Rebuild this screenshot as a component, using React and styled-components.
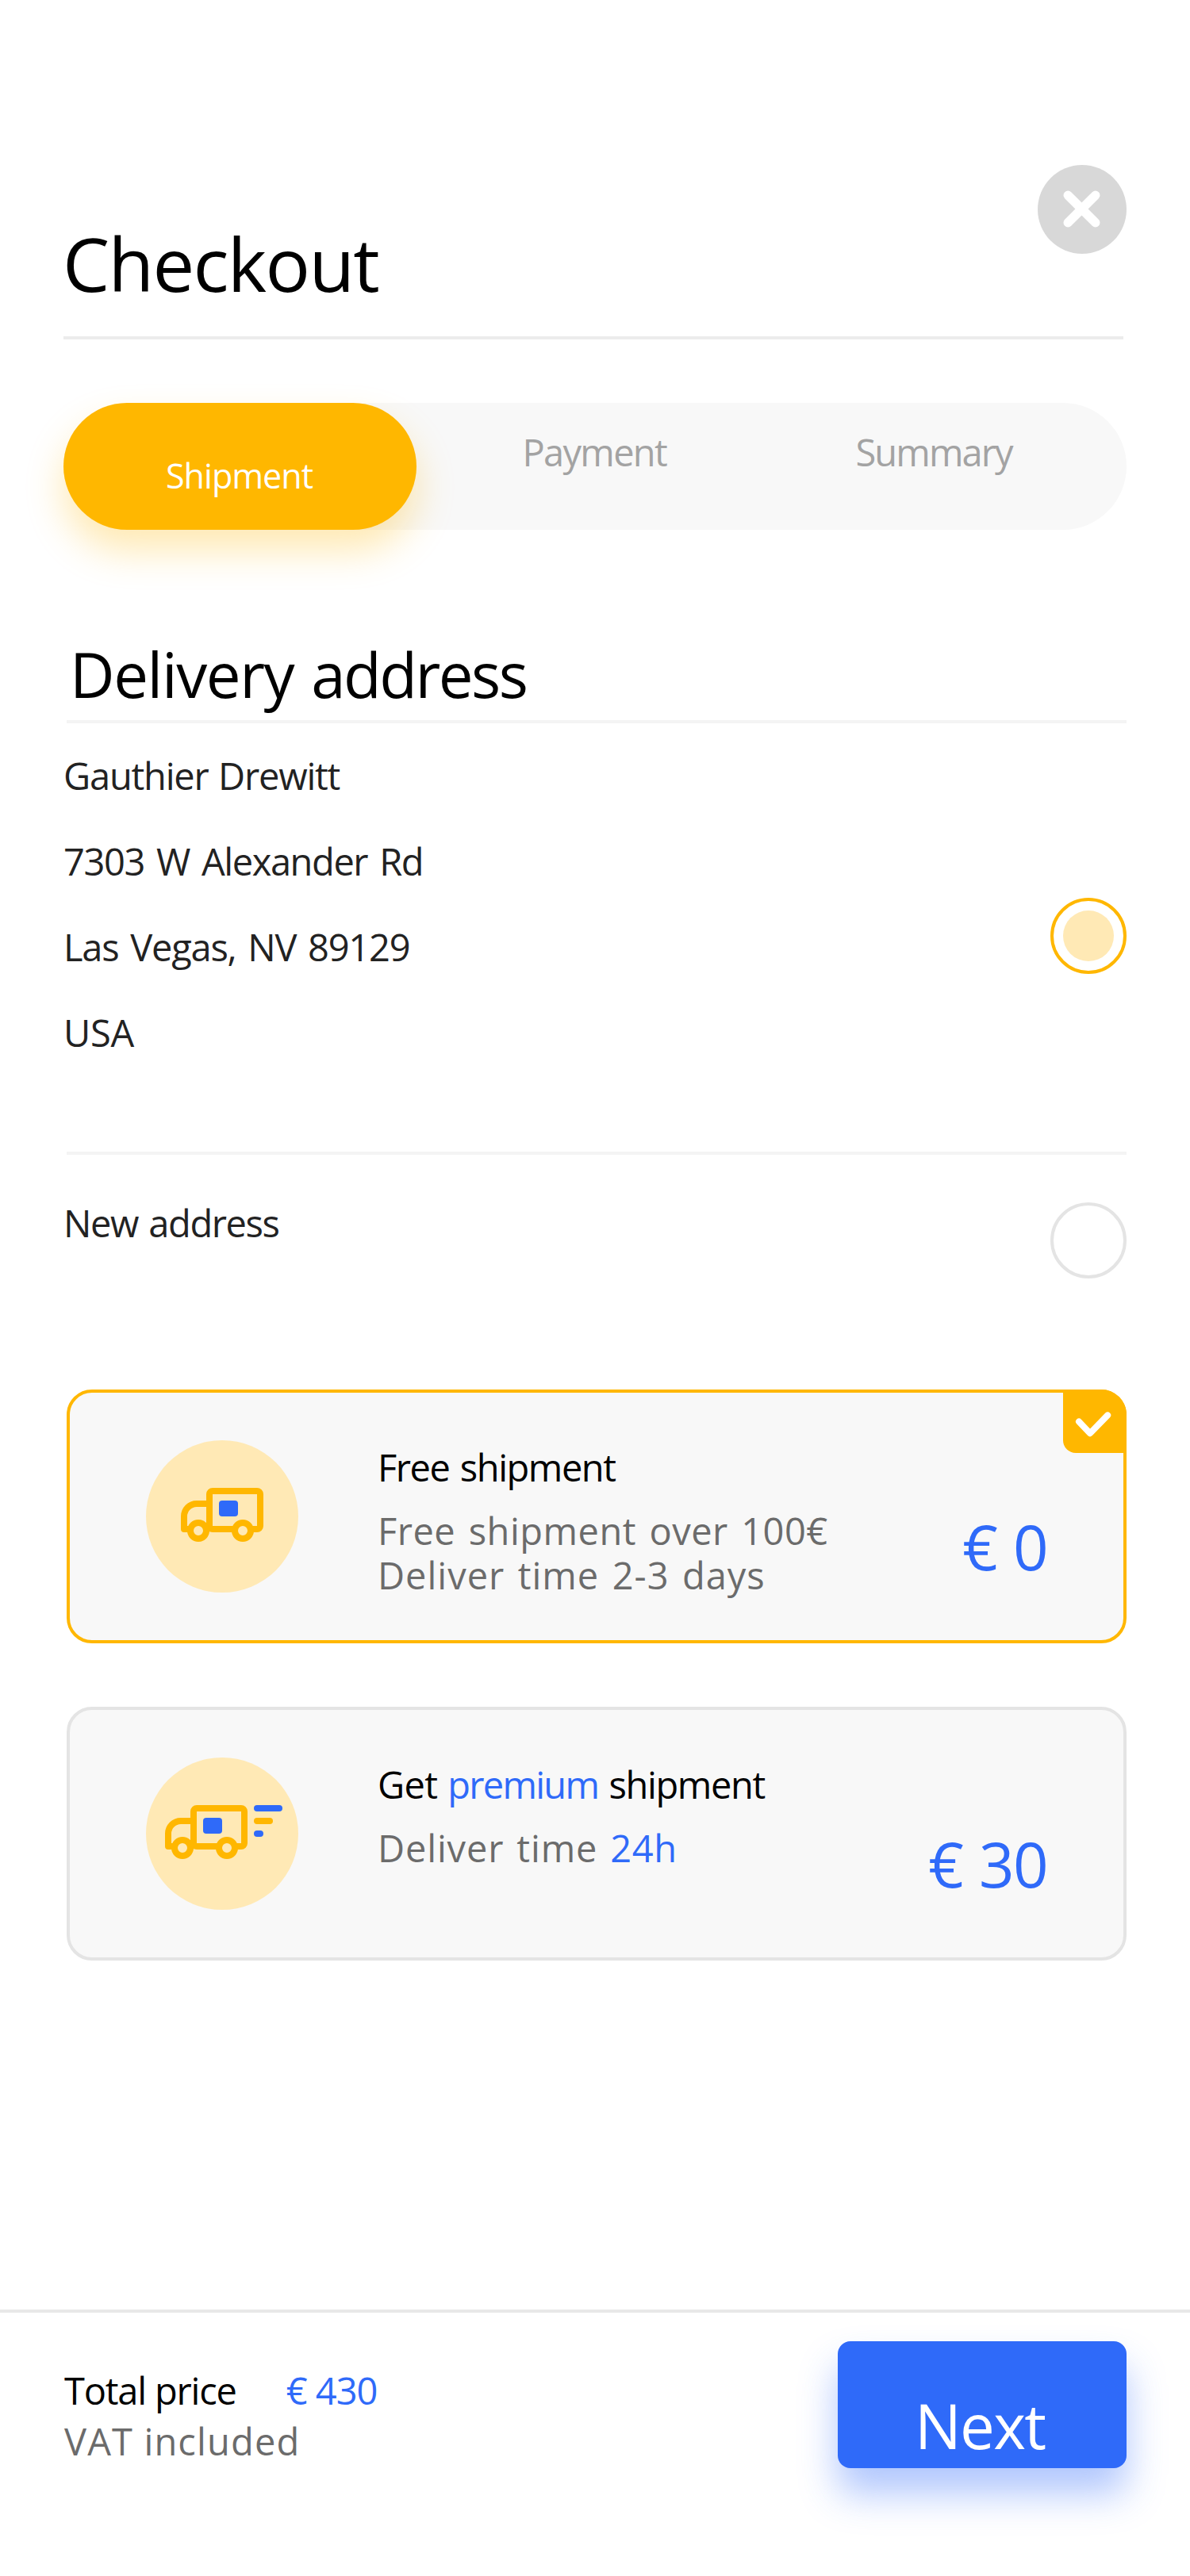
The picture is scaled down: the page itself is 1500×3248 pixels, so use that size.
import React from "react";
import styled, { createGlobalStyle, css } from "styled-components";

const color = {
  amber: "#ffb700",
  amberSoft: "#ffe9b5",
  blue: "#2f6af9",
  panel: "#f8f8f8",
  outline: "#e4e4e4",
  rule: "#f4f4f4",
  text: "#222222",
  muted: "#6b6b6b",
  inactive: "#a3a3a3",
};

const GlobalStyle = createGlobalStyle`
  *, *::before, *::after { box-sizing: border-box; }
  body { margin: 0; background: #ffffff; }
  button { font: inherit; border: 0; padding: 0; background: none; cursor: pointer; text-align: left; }
  h1, h2, h3, p { margin: 0; font-weight: 400; }
`;

const Page = styled.main`
  display: flex;
  flex-direction: column;
  width: 1500px;
  height: 3248px;
  padding-top: 208px;
  overflow: hidden;
  background: #ffffff;
  color: #000000;
  font-family: "Open Sans", "Noto Sans", sans-serif;
  font-size: 47px;
  line-height: 64px;
  white-space: nowrap;
`;

const tracked = css`
  letter-spacing: ${(p) => p.$track || 0}px;
  word-spacing: ${(p) => p.$words || 0}px;
`;

/* Header */
const Header = styled.header`
  display: flex;
  justify-content: space-between;
  align-items: flex-start;
  height: 216px;
  padding: 0 80px 0 79px;
`;

const Title = styled.h1`
  padding-top: 60px;
  font-size: 94px;
  line-height: 128px;
  letter-spacing: -1.7px;
`;

const CloseButton = styled.button`
  width: 112px;
  height: 112px;
  border-radius: 50%;
  background: #d8d8d8;

  svg {
    display: block;
  }
`;

const HeaderRule = styled.div`
  width: 1336px;
  height: 4px;
  margin-left: 80px;
  background: #ececec;
`;

/* Steps */
const Steps = styled.nav`
  display: grid;
  grid-template-columns: 445px 448px 1fr;
  height: 160px;
  margin: 80px 80px 0;
  border-radius: 80px;
  background: ${color.panel};
`;

const Step = styled.button`
  display: flex;
  align-items: flex-start;
  padding: 30px 0 0 ${(p) => p.$inset}px;
  color: ${color.inactive};
  line-height: 64px;
  ${tracked}
  ${(p) =>
    p.$active &&
    css`
      padding-top: 62px;
      border-radius: 80px;
      background: ${color.amber};
      box-shadow: 0 26px 48px rgba(255, 183, 0, 0.3);
      color: #ffffff;
      font-size: 43px;
      line-height: 59px;
    `}
`;

/* Address */
const AddressSection = styled.section`
  display: flex;
  flex-direction: column;
  margin-top: 129px;
  padding: 0 80px 0 79px;
`;

const SectionTitle = styled.h2`
  height: 111px;
  padding-left: 9px;
  font-size: 78px;
  line-height: 106px;
  letter-spacing: -1.4px;
  word-spacing: 3px;
`;

const Rule = styled.div`
  height: 4px;
  margin-left: 5px;
  background: ${color.rule};
`;

const AddressRow = styled.div`
  display: flex;
  justify-content: space-between;
  align-items: flex-start;
  height: ${(p) => p.$height}px;
  padding-top: ${(p) => p.$top}px;
  color: ${color.text};
`;

const AddressLines = styled.address`
  padding-left: 1px;
  font-style: normal;
  line-height: ${(p) => p.$leading}px;
`;

const AddressLine = styled.p`
  ${tracked}
`;

const Radio = styled.button`
  display: flex;
  align-items: center;
  justify-content: center;
  width: 96px;
  height: 96px;
  margin-top: ${(p) => p.$drop}px;
  border: 4px solid ${(p) => (p.$checked ? color.amber : color.outline)};
  border-radius: 50%;
`;

const RadioDot = styled.span`
  width: 64px;
  height: 64px;
  border-radius: 50%;
  background: ${color.amberSoft};
`;

/* Shipping options */
const Options = styled.section`
  display: flex;
  flex-direction: column;
  gap: 80px;
  margin-top: 80px;
  padding: 0 80px 0 84px;
`;

const OptionCard = styled.article`
  position: relative;
  display: flex;
  align-items: flex-start;
  height: 320px;
  padding: 60px 96px 0;
  border: 4px solid ${(p) => (p.$selected ? color.amber : color.outline)};
  border-radius: 32px;
  background: ${color.panel};
`;

const SelectedBadge = styled.span`
  position: absolute;
  top: -4px;
  right: -4px;
  width: 80px;
  height: 80px;
  border-radius: 0 32px 0 16px;
  background: ${color.amber};

  svg {
    display: block;
  }
`;

const IconDisc = styled.div`
  flex: none;
  width: 192px;
  height: 192px;
  border-radius: 50%;
  background: ${color.amberSoft};

  svg {
    display: block;
  }
`;

const OptionText = styled.div`
  flex: 1;
  margin-left: 100px;
  padding-top: 2px;
`;

const OptionTitle = styled.h3`
  font-size: 47px;
  ${tracked}
`;

const OptionDetails = styled.div`
  margin-top: 20px;
  color: ${color.muted};
  line-height: 56px;
`;

const OptionDetail = styled.p`
  ${tracked}
`;

const Highlight = styled.span`
  color: ${color.blue};
  ${tracked}
`;

const Price = styled.span`
  margin-top: 81px;
  color: ${color.blue};
  font-size: 78px;
  line-height: 106px;
  letter-spacing: -1.6px;
  word-spacing: 2px;
`;

/* Footer */
const Footer = styled.footer`
  display: flex;
  justify-content: space-between;
  align-items: flex-start;
  height: 336px;
  margin-top: 440px;
  padding: 0 80px 0 81px;
  border-top: 4px solid #e8e8e8;
`;

const Totals = styled.div`
  padding-top: 66px;
`;

const TotalRow = styled.div`
  display: flex;
  gap: 63px;
`;

const Label = styled.span`
  ${tracked}
`;

const Note = styled.p`
  color: ${color.muted};
  ${tracked}
`;

const NextButton = styled.button`
  display: flex;
  align-items: flex-start;
  width: 364px;
  height: 160px;
  margin-top: 36px;
  padding: 53px 0 0 97px;
  border-radius: 16px;
  background: ${color.blue};
  box-shadow: 0 32px 48px rgba(47, 106, 249, 0.38);
  color: #ffffff;
  font-size: 78px;
  line-height: 106px;
  letter-spacing: -1.7px;
`;

function CloseIcon() {
  return (
    <svg width="112" height="112" viewBox="0 0 112 112" fill="none" stroke="#ffffff" strokeWidth="11.4" strokeLinecap="round">
      <path d="M38.2 38.2 72.8 72.8M72.8 38.2 38.2 72.8" />
    </svg>
  );
}

function CheckIcon() {
  return (
    <svg width="80" height="80" viewBox="0 0 80 80" fill="none" stroke="#ffffff" strokeWidth="8" strokeLinecap="round" strokeLinejoin="round">
      <path d="M20 40.4 34 55.2 56.2 32.4" />
    </svg>
  );
}

function TruckIcon({ fast }) {
  return (
    <svg width="192" height="192" viewBox="0 0 192 192" fill="none">
      <g transform={fast ? "translate(-20 0)" : undefined}>
        <g stroke={color.amber} strokeWidth="8" strokeLinejoin="round">
          <rect x="80" y="64" width="64" height="48" rx="4" />
          <path d="M80 80H64a16 16 0 0 0-16 16v16h32" />
          <circle cx="66" cy="114" r="10" fill={color.amberSoft} />
          <circle cx="122" cy="114" r="10" fill={color.amberSoft} />
        </g>
        <rect x="92" y="76" width="24" height="20" rx="4" fill={color.blue} />
      </g>
      {fast && (
        <g>
          <rect x="136" y="60" width="36" height="8" rx="4" fill={color.blue} />
          <rect x="136" y="76" width="24" height="8" rx="4" fill={color.amber} />
          <rect x="136" y="92" width="12" height="8" rx="4" fill={color.blue} />
        </g>
      )}
    </svg>
  );
}

const addressLines = [
  { text: "Gauthier Drewitt", track: -1.2, words: 1.5 },
  { text: "7303 W Alexander Rd", track: -1.4, words: 4.2 },
  { text: "Las Vegas, NV 89129", track: -1.2, words: 3.7 },
  { text: "USA", track: -0.3 },
];

export default function App() {
  return (
    <>
      <GlobalStyle />
      <Page>
        <Header>
          <Title>Checkout</Title>
          <CloseButton aria-label="Close">
            <CloseIcon />
          </CloseButton>
        </Header>
        <HeaderRule />

        <Steps>
          <Step $active $inset={129} $track={-0.96}>Shipment</Step>
          <Step $inset={133.5} $track={-1.7}>Payment</Step>
          <Step $inset={105.5} $track={-1.9}>Summary</Step>
        </Steps>

        <AddressSection>
          <SectionTitle>
            Delivery <Label $track={-2.5}>address</Label>
          </SectionTitle>
          <Rule />
          <AddressRow $height={540} $top={12}>
            <AddressLines $leading={108}>
              {addressLines.map((line) => (
                <AddressLine key={line.text} $track={line.track} $words={line.words}>{line.text}</AddressLine>
              ))}
            </AddressLines>
            <Radio $checked $drop={208} aria-label="Use saved address">
              <RadioDot />
            </Radio>
          </AddressRow>
          <Rule />
          <AddressRow $height={216} $top={54}>
            <AddressLines $leading={64}>
              <AddressLine $track={-1.4} $words={2.5}>New address</AddressLine>
            </AddressLines>
            <Radio $drop={6} aria-label="Use new address" />
          </AddressRow>
        </AddressSection>

        <Options>
          <OptionCard $selected>
            <IconDisc>
              <TruckIcon />
            </IconDisc>
            <OptionText>
              <OptionTitle $track={-1.45} $words={2.6}>Free shipment</OptionTitle>
              <OptionDetails>
                <OptionDetail $track={0.5} $words={3.7}>Free shipment over 100€</OptionDetail>
                <OptionDetail $track={1} $words={3.2}>Deliver time 2-3 days</OptionDetail>
              </OptionDetails>
            </OptionText>
            <Price>€ 0</Price>
            <SelectedBadge>
              <CheckIcon />
            </SelectedBadge>
          </OptionCard>

          <OptionCard>
            <IconDisc>
              <TruckIcon fast />
            </IconDisc>
            <OptionText>
              <OptionTitle $track={-1.4} $words={2.5}>
                <Label $track={-0.6} $words={1}>Get </Label>
                <Highlight $track={-1.7}>premium</Highlight> shipment
              </OptionTitle>
              <OptionDetails>
                <OptionDetail $track={0.85} $words={3}>
                  Deliver time <Highlight $track={0.6}>24h</Highlight>
                </OptionDetail>
              </OptionDetails>
            </OptionText>
            <Price>€ 30</Price>
          </OptionCard>
        </Options>

        <Footer>
          <Totals>
            <TotalRow>
              <Label $track={-1.19}>Total price</Label>
              <Highlight $track={-1}>€ 430</Highlight>
            </TotalRow>
            <Note $track={1.14}>VAT included</Note>
          </Totals>
          <NextButton>Next</NextButton>
        </Footer>
      </Page>
    </>
  );
}
